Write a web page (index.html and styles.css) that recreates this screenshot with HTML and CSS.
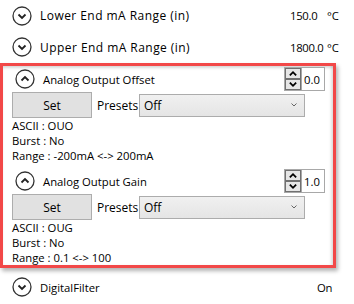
FILE: index.html
```html
<!DOCTYPE html>
<html>
<head>
    <title>Analog Output</title>
    <link rel="stylesheet" href="styles.css">
</head>
<body>
    <div class="list">
        <div class="row">
            <span class="toggle"><svg viewBox="0 0 20 20"><circle cx="10" cy="10" r="9"/><path d="M6.5 8.5 L10 12 L13.5 8.5"/></svg></span>
            <span class="label wide">Lower End mA Range (in)</span>
            <span class="value">150.0</span>
            <span class="unit">°C</span>
        </div>
        <div class="row">
            <span class="toggle"><svg viewBox="0 0 20 20"><circle cx="10" cy="10" r="9"/><path d="M6.5 8.5 L10 12 L13.5 8.5"/></svg></span>
            <span class="label wide">Upper End mA Range (in)</span>
            <span class="value">1800.0</span>
            <span class="unit">°C</span>
        </div>

        <div class="group">
            <div class="item">
                <div class="head">
                    <span class="toggle"><svg viewBox="0 0 20 20"><circle cx="10" cy="10" r="9"/><path d="M6.5 11.5 L10 8 L13.5 11.5"/></svg></span>
                    <span class="label">Analog Output Offset</span>
                    <div class="spin">
                        <div class="spin-btns">
                            <span class="arrow"><svg viewBox="0 0 12 10"><path d="M2.5 7 L6 3.5 L9.5 7"/></svg></span>
                            <span class="arrow"><svg viewBox="0 0 12 10"><path d="M2.5 3 L6 6.5 L9.5 3"/></svg></span>
                        </div>
                        <span class="spin-val">0.0</span>
                    </div>
                </div>
                <div class="controls">
                    <button class="set">Set</button>
                    <span class="presets">Presets</span>
                    <div class="select">
                        <span>Off</span>
                        <svg viewBox="0 0 8 6"><path d="M1.5 1.5 L4 4 L6.5 1.5"/></svg>
                    </div>
                </div>
                <div class="info">ASCII : OUO</div>
                <div class="info">Burst : No</div>
                <div class="info">Range : -200mA &lt;-&gt; 200mA</div>
            </div>

            <div class="item second">
                <div class="head">
                    <span class="toggle"><svg viewBox="0 0 20 20"><circle cx="10" cy="10" r="9"/><path d="M6.5 11.5 L10 8 L13.5 11.5"/></svg></span>
                    <span class="label">Analog Output Gain</span>
                    <div class="spin">
                        <div class="spin-btns">
                            <span class="arrow"><svg viewBox="0 0 12 10"><path d="M2.5 7 L6 3.5 L9.5 7"/></svg></span>
                            <span class="arrow"><svg viewBox="0 0 12 10"><path d="M2.5 3 L6 6.5 L9.5 3"/></svg></span>
                        </div>
                        <span class="spin-val">1.0</span>
                    </div>
                </div>
                <div class="controls">
                    <button class="set">Set</button>
                    <span class="presets">Presets</span>
                    <div class="select">
                        <span>Off</span>
                        <svg viewBox="0 0 8 6"><path d="M1.5 1.5 L4 4 L6.5 1.5"/></svg>
                    </div>
                </div>
                <div class="info">ASCII : OUG</div>
                <div class="info">Burst : No</div>
                <div class="info">Range : 0.1 &lt;-&gt; 100</div>
            </div>
        </div>

        <div class="row last">
            <span class="toggle"><svg viewBox="0 0 20 20"><circle cx="10" cy="10" r="9"/><path d="M6.5 8.5 L10 12 L13.5 8.5"/></svg></span>
            <span class="label">DigitalFilter</span>
            <span class="value">On</span>
        </div>
    </div>
</body>
</html>
```

FILE: styles.css
```css
body { margin: 0; background: #fff; font-family: "Open Sans", sans-serif; font-size: 11.3px; color: #000; }
.list { width: 354px; }

.row { display: flex; align-items: center; height: 32px; padding-left: 12px; white-space: nowrap; }
.row:first-child { height: 31px; }
.row.last { height: 34px; margin-top: 2px; }
.toggle { width: 20px; height: 20px; margin-right: 8px; flex: none; }
.toggle svg { width: 20px; height: 20px; display: block; fill: none; stroke: #333; stroke-width: 1.3; }
.toggle svg path { stroke-width: 1.8; stroke: #222; }
.row .label { flex: 1; }
.row .label.wide { font-size: 12px; letter-spacing: 0.45px; }
.value { width: 37px; flex: none; letter-spacing: -0.3px; }
.unit { width: 27px; flex: none; }

.group {
    width: 336px;
    box-sizing: border-box;
    border: 3px solid #f24848;
    padding: 0 8px 0 9px;
    box-shadow: 2px 3px 4px rgba(0,0,0,0.3), inset 0 3px 3px -1px rgba(0,0,0,0.15), inset -3px 0 3px -1px rgba(0,0,0,0.12);
}
.item.second { margin-top: 5px; }
.head { display: flex; align-items: center; height: 26px; }
.head .toggle { margin-left: 3px; }
.spin { margin-left: auto; display: flex; align-items: center; height: 24px; border: 1px solid #a8a8a8; box-sizing: border-box; width: 41px; background: #fff; }
.spin-btns { display: flex; flex-direction: column; width: 16px; height: 22px; border-right: 1px solid #a8a8a8; }
.arrow { flex: 1; border: 1px solid #707070; background: #e6e6e6; display: flex; align-items: center; justify-content: center; }
.arrow svg { width: 12px; height: 9px; fill: none; stroke: #000; stroke-width: 2; }
.spin-val { padding-left: 2px; }

.controls { display: flex; align-items: center; height: 26px; }
.set {
    width: 80px; height: 26px;
    background: #e1e1e1; border: 1px solid #adadad;
    font-family: inherit; font-size: 12px; color: #000;
    padding: 0;
}
.presets { margin-left: 5px; width: 42px; font-size: 12px; }
.select {
    width: 166px; height: 23px; box-sizing: border-box;
    border: 1px solid #acacac;
    background: linear-gradient(#f0f0f0, #e5e5e5);
    display: flex; align-items: center; justify-content: space-between;
    padding: 0 6px 0 4px;
    font-size: 12px;
}
.select svg { width: 8px; height: 6px; fill: none; stroke: #666; stroke-width: 1; }

.info { height: 15px; line-height: 15px; white-space: nowrap; }
```
